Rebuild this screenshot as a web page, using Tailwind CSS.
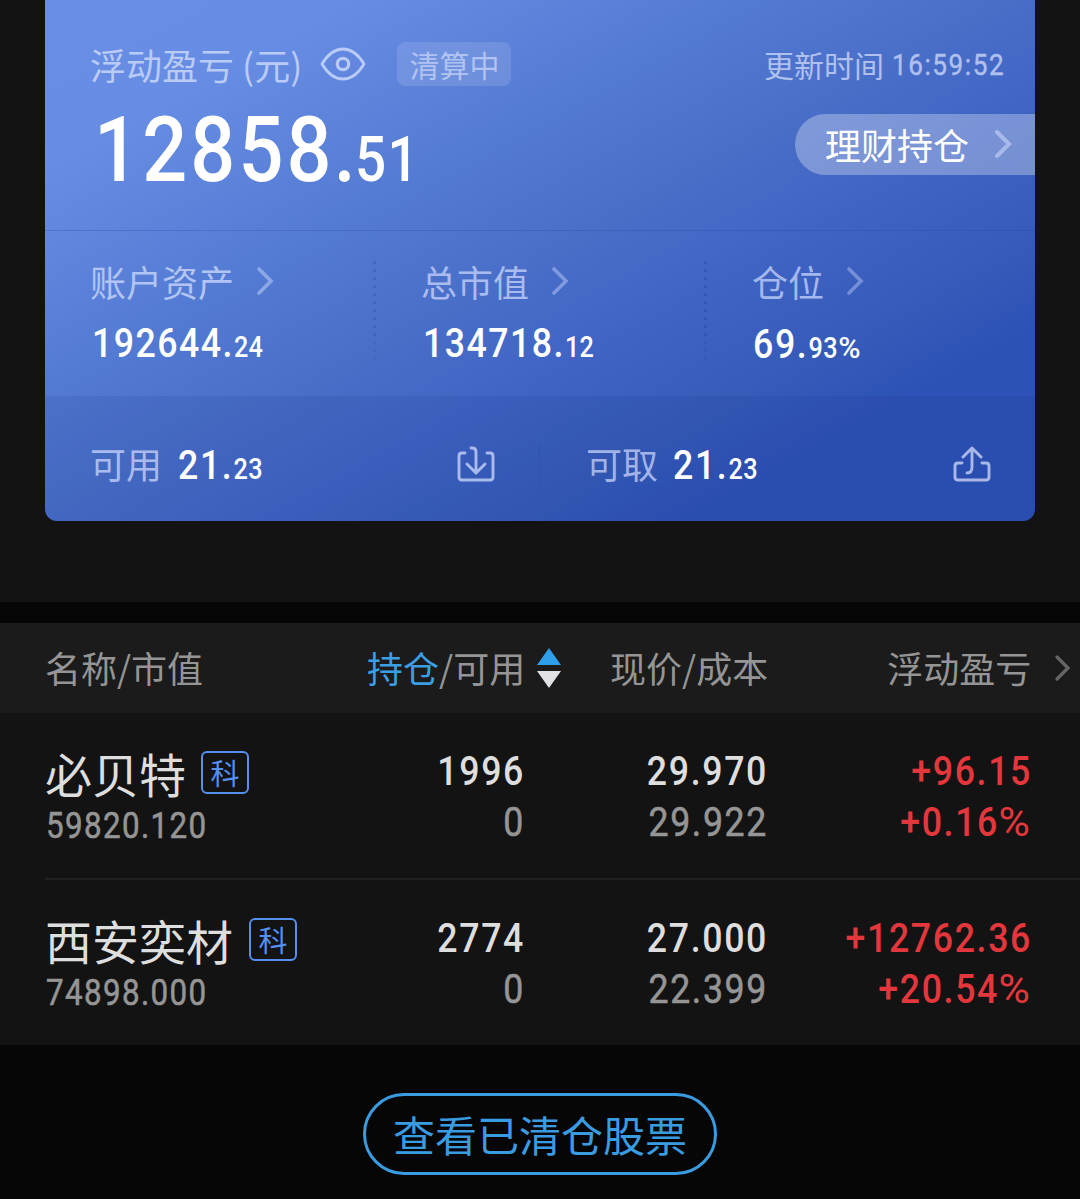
<!doctype html>
<html lang="zh-CN">
<head>
  <meta charset="UTF-8" />
  <meta name="viewport" content="width=device-width, initial-scale=1.0" />
  <title>持仓</title>
  <script src="https://cdn.jsdelivr.net/npm/@tailwindcss/browser@4"></script>
</head>
<body class="w-[1080px] h-[1199px] overflow-hidden bg-[#060606] font-['Noto_Sans_CJK_SC',sans-serif] whitespace-nowrap">

  <!-- Asset card -->
  <section class="h-[602px] px-[45px] bg-[#131313]">
    <div class="h-[521px] rounded-b-xl overflow-hidden bg-[linear-gradient(151deg,#688ee5_0%,#668ce3_16%,#5e84dc_25%,#547bd3_36%,#4a70c9_48%,#4064c4_61%,#365bb9_73%,#2d52b7_82%,#2d52b7_100%)]">
      <div class="h-[231px] pt-[42px] pl-[45px] border-b border-[#2040a0]/25">
        <div class="flex items-center h-[44px]">
          <span class="text-[36px] leading-[44px] text-[#b9cbf6]">浮动盈亏 (元)</span>
          <svg class="ml-[18px] w-[46px] h-[34px]" viewBox="0 0 46 34" fill="none" stroke="#b9cbf6" stroke-width="2.8">
            <path d="M2 17C8 7 15 2 23 2s15 5 21 15c-6 10-13 15-21 15S8 27 2 17z" stroke-linejoin="round" />
            <circle cx="23" cy="17" r="5.7" stroke-width="3.2" />
          </svg>
          <span class="ml-[31px] w-[114px] h-[44px] rounded-lg bg-white/12 text-center text-[30px] leading-[44px] text-[#b0c3f2]">清算中</span>
          <span class="ml-auto mr-[30px] flex items-center text-[#b0c1f0]">
            <span class="text-[30px] leading-[44px]">更新时间</span>
            <span class="ml-[8px] w-[113px] pt-px font-[Roboto] text-[30px] tracking-[1.8px] [-webkit-text-stroke:0.4px]"><span class="inline-block origin-left scale-x-[.87]">16:59:52</span></span>
          </span>
        </div>
        <div class="flex items-start justify-between">
          <div class="mt-[11px] ml-[4px] font-[Roboto] font-medium text-white leading-[106px] text-[91px] tracking-[3.6px] origin-left scale-x-[.87]">12858<span class="-ml-[1px] tracking-[-1px]">.</span><span class="text-[63px] tracking-[1.5px]">51</span></div>
          <div class="mt-[28px] flex items-center w-[240px] h-[61px] pl-[30px] rounded-l-full bg-white/30">
            <span class="text-[36px] leading-[61px] text-white">理财持仓</span>
            <svg class="ml-[25px] mb-[2px] w-[18px] h-[28px]" viewBox="0 0 18 28" fill="none" stroke="#a9baea" stroke-width="4" stroke-linecap="round"><path d="M3 2l12 12L3 26" /></svg>
          </div>
        </div>
      </div>

      <div class="h-[165px] pt-[30px] flex">
        <div class="w-[328px] pl-[45px]">
          <div class="flex items-center h-[40px]">
            <span class="text-[36px] leading-[40px] text-[#b1c4f3]">账户资产</span>
            <svg class="ml-[22px] w-[18px] h-[28px]" viewBox="0 0 18 28" fill="none" stroke="#8ca8e6" stroke-width="3.6" stroke-linecap="round"><path d="M3 2l12 12L3 26" /></svg>
          </div>
          <div class="mt-[18px] ml-[2px] font-[Roboto] font-medium text-white text-[41px] leading-[48px] tracking-[1.7px] origin-left scale-x-[.87]">192644.<span class="text-[29px] tracking-[.4px]">24</span></div>
        </div>
        <div class="w-[331px] flex">
          <div class="w-[3px] h-[105px] bg-[repeating-linear-gradient(180deg,#4168c1_0px,#4168c1_3px,transparent_3px,transparent_8px)]"></div>
          <div class="pl-[45px]">
            <div class="flex items-center h-[40px]">
              <span class="text-[36px] leading-[40px] text-[#aabcef]">总市值</span>
              <svg class="ml-[22px] w-[18px] h-[28px]" viewBox="0 0 18 28" fill="none" stroke="#7f9ae0" stroke-width="3.6" stroke-linecap="round"><path d="M3 2l12 12L3 26" /></svg>
            </div>
            <div class="mt-[18px] ml-[2px] font-[Roboto] font-medium text-white text-[41px] leading-[48px] tracking-[1.7px] origin-left scale-x-[.87]">134718.<span class="text-[29px] tracking-[.4px]">12</span></div>
          </div>
        </div>
        <div class="flex">
          <div class="w-[3px] h-[105px] bg-[repeating-linear-gradient(180deg,#3558b3_0px,#3558b3_3px,transparent_3px,transparent_8px)]"></div>
          <div class="pl-[45px]">
            <div class="flex items-center h-[40px]">
              <span class="text-[36px] leading-[40px] text-[#a5b8ed]">仓位</span>
              <svg class="ml-[22px] w-[18px] h-[28px]" viewBox="0 0 18 28" fill="none" stroke="#758fd8" stroke-width="3.6" stroke-linecap="round"><path d="M3 2l12 12L3 26" /></svg>
            </div>
            <div class="mt-[19px] ml-px font-[Roboto] font-medium text-white text-[41px] leading-[48px] tracking-[1.9px] origin-left scale-x-[.87]">69.<span class="text-[29px] tracking-[.6px]">93<span class="inline-block origin-left scale-x-[1.2]">%</span></span></div>
          </div>
        </div>
      </div>

      <div class="h-[125px] flex items-center pt-[12px] bg-[#1c2f80]/12">
        <div class="w-[494px] pl-[45px] flex items-center">
          <span class="text-[36px] leading-[42px] pb-[4px] text-[#a9bbee]">可用</span>
          <span class="ml-[16px] pt-[4px] font-[Roboto] font-medium text-white text-[41px] leading-[48px] tracking-[1.9px] origin-left scale-x-[.87]">21.<span class="text-[29px] tracking-[.6px]">23</span></span>
          <svg class="ml-auto mr-[44px] mb-[2px] w-[38px] h-[36px]" viewBox="0 0 38 36" fill="none" stroke="#aabbee" stroke-width="2.9" stroke-linecap="round" stroke-linejoin="round">
            <path d="M8 7H5q-3 0-3 3v21q0 3 3 3h28q3 0 3-3V10q0-3-3-3h-3" />
            <path d="M14 2h1q4 0 4 4v20M10 18l9 9 9-9" />
          </svg>
        </div>
        <div class="w-px h-[40px] bg-[#2c4faa]/60"></div>
        <div class="flex-1 pl-[46px] flex items-center">
          <span class="text-[36px] leading-[42px] pb-[4px] text-[#a2b3e7]">可取</span>
          <span class="ml-[15px] pt-[4px] font-[Roboto] font-medium text-white text-[41px] leading-[48px] tracking-[1.9px] origin-left scale-x-[.87]">21.<span class="text-[29px] tracking-[.6px]">23</span></span>
          <svg class="ml-auto mr-[44px] mb-[2px] w-[38px] h-[36px]" viewBox="0 0 38 36" fill="none" stroke="#a9b8e8" stroke-width="2.9" stroke-linecap="round" stroke-linejoin="round">
            <path d="M9 17H5q-3 0-3 3v11q0 3 3 3h28q3 0 3-3V20q0-3-3-3h-4" />
            <path d="M10 11l9-9 9 9M19 3v18q0 6-5 6" />
          </svg>
        </div>
      </div>
    </div>
  </section>

  <!-- Holdings -->
  <section class="mt-[21px] bg-[#131313]">
    <div class="h-[90px] flex items-center bg-[#1b1b1b] text-[36px] leading-[42px] text-[#959595]">
      <span class="w-[322px] ml-[45px] pb-[3px]">名称/市值</span>
      <span class="pb-[3px]"><span class="text-[#3a9fe4]">持仓</span>/可用</span>
      <svg class="ml-[12px] mr-px w-[24px] h-[40px]" viewBox="0 0 24 40"><path d="M12 0l12 17H0z" fill="#2f9fec" /><path d="M0 23h24L12 40z" fill="#e0e3e6" /></svg>
      <span class="w-[206px] pb-[3px] text-right">现价/成本</span>
      <span class="w-[263px] pb-[3px] text-right">浮动盈亏</span>
      <svg class="ml-[23px] w-[17px] h-[26px]" viewBox="0 0 17 26" fill="none" stroke="#666" stroke-width="3.2" stroke-linecap="round"><path d="M3 2l11 11L3 24" /></svg>
    </div>

    <div class="h-[167px] ml-[45px] pt-[32px] flex border-b-2 border-[#20201e] font-[Roboto] text-[41px] leading-[51px] tracking-[1.9px]">
      <div class="w-[280px]">
        <div class="flex items-center h-[55px] font-['Noto_Sans_CJK_SC',sans-serif] tracking-normal">
          <span class="text-[47px] leading-[55px] text-[#dedede]">必贝特</span>
          <span class="ml-[15px] w-[48px] h-[43px] border-2 border-[#5590ee] rounded-md text-center text-[29px] leading-[38px] text-[#5590ee]">科</span>
        </div>
        <div class="mt-[3px] ml-px text-[36px] leading-[46px] tracking-[1.6px] text-[#959595] origin-left scale-x-[.87] [-webkit-text-stroke:0.6px]">59820.120</div>
      </div>
      <div class="w-[200px] pt-[2px] text-right origin-right scale-x-[.87]">
        <div class="-mt-px font-medium text-[#dedede]">1996</div>
        <div class="text-[#959595] [-webkit-text-stroke:0.6px]">0</div>
      </div>
      <div class="w-[243px] pt-[2px] text-right origin-right scale-x-[.87]">
        <div class="-mt-px font-medium text-[#dedede]">29.970</div>
        <div class="text-[#959595] [-webkit-text-stroke:0.6px]">29.922</div>
      </div>
      <div class="w-[264px] pt-[2px] text-right origin-right scale-x-[.87] font-medium text-[#e4373d]">
        <div class="-mt-px">+96.15</div>
        <div>+0.16<span class="inline-block ml-[6px] origin-right scale-x-[1.2] font-normal">%</span></div>
      </div>
    </div>

    <div class="h-[165px] ml-[45px] pt-[32px] flex font-[Roboto] text-[41px] leading-[51px] tracking-[1.9px]">
      <div class="w-[280px]">
        <div class="flex items-center h-[55px] font-['Noto_Sans_CJK_SC',sans-serif] tracking-normal">
          <span class="text-[47px] leading-[55px] text-[#dedede]">西安奕材</span>
          <span class="ml-[16px] w-[48px] h-[43px] border-2 border-[#5590ee] rounded-md text-center text-[29px] leading-[38px] text-[#5590ee]">科</span>
        </div>
        <div class="mt-[3px] ml-px text-[36px] leading-[46px] tracking-[1.6px] text-[#959595] origin-left scale-x-[.87] [-webkit-text-stroke:0.6px]">74898.000</div>
      </div>
      <div class="w-[200px] pt-[2px] text-right origin-right scale-x-[.87]">
        <div class="-mt-px font-medium text-[#dedede]">2774</div>
        <div class="text-[#959595] [-webkit-text-stroke:0.6px]">0</div>
      </div>
      <div class="w-[243px] pt-[2px] text-right origin-right scale-x-[.87]">
        <div class="-mt-px font-medium text-[#dedede]">27.000</div>
        <div class="text-[#959595] [-webkit-text-stroke:0.6px]">22.399</div>
      </div>
      <div class="w-[264px] pt-[2px] text-right origin-right scale-x-[.87] font-medium text-[#e4373d]">
        <div class="-mt-px">+12762.36</div>
        <div>+20.54<span class="inline-block ml-[6px] origin-right scale-x-[1.2] font-normal">%</span></div>
      </div>
    </div>
  </section>

  <div class="pt-[48px] flex justify-center">
    <button class="w-[354px] h-[82px] pb-px border-3 border-[#3a9ce0] rounded-full text-[42px] leading-[73px] text-[#3a9ce0]">查看已清仓股票</button>
  </div>

</body>
</html>
